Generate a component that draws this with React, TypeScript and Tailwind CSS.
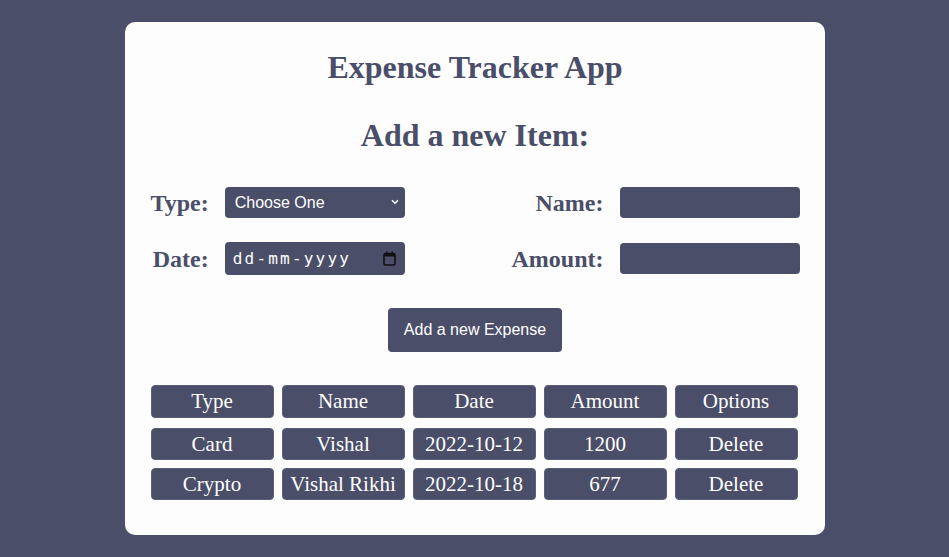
import { useState } from "react";

const serif = "font-['Liberation_Serif',serif]";
const sans = "font-['Liberation_Sans',Arial,sans-serif]";
const labelCls = `${serif} text-[24px] font-bold text-[#4a4e69] text-right leading-none`;
const fieldCls = `${sans} w-[180px] rounded-[4px] bg-[#4a4e69] text-white text-[16px] outline-none`;
const cellCls = `${serif} flex items-center justify-center rounded-[4px] border border-[#5c6075] bg-[#4a4e69] text-white text-[21px] leading-none`;

type Item = { type: string; name: string; date: string; amount: string };

const ITEMS: Item[] = [
  { type: "Card", name: "Vishal", date: "2022-10-12", amount: "1200" },
  { type: "Crypto", name: "Vishal Rikhi", date: "2022-10-18", amount: "677" },
];

function CalendarIcon() {
  return (
    <svg width="13" height="15" viewBox="0 0 13 15" fill="none" aria-hidden="true">
      <rect x="1" y="2.5" width="11" height="11.5" rx="1.5" stroke="#111" strokeWidth="1.6" />
      <rect x="1" y="2.5" width="11" height="3" fill="#111" />
      <rect x="3" y="0.5" width="1.6" height="3" fill="#111" />
      <rect x="8.4" y="0.5" width="1.6" height="3" fill="#111" />
    </svg>
  );
}

export default function App() {
  const [items] = useState(ITEMS);

  return (
    <div className="min-h-screen bg-[#4a4e69] pt-[22px] pb-[22px]">
      <div className="mx-auto w-[700px] rounded-[10px] bg-[#fdfdfd] pl-[26px] pr-[25px] pt-[27px] pb-[35px]">
        <h1 className={`${serif} text-center text-[32px] font-bold leading-[37px] text-[#4a4e69]`}>
          Expense Tracker App
        </h1>
        <h2 className={`${serif} mt-[31px] text-center text-[32px] font-bold leading-[37px] text-[#4a4e69]`}>
          Add a new Item:
        </h2>

        <div className="mt-[33px] grid grid-cols-[auto_180px_1fr_auto_180px] items-center gap-x-[16px] gap-y-[24px]">
          <label className={labelCls}>Type:</label>
          <div className="relative">
            <select className={`${fieldCls} h-[31px] appearance-none pl-[10px]`} defaultValue="">
              <option value="">Choose One</option>
              <option>Card</option>
              <option>Cash</option>
              <option>Crypto</option>
            </select>
            <svg
              className="pointer-events-none absolute right-[6px] top-[12px]"
              width="8"
              height="6"
              viewBox="0 0 8 6"
              fill="none"
              aria-hidden="true"
            >
              <path d="M1 1.2l3 3 3-3" stroke="#fff" strokeWidth="1.6" />
            </svg>
          </div>
          <div />
          <label className={labelCls}>Name:</label>
          <input className={`${fieldCls} h-[31px] px-[8px]`} type="text" />

          <label className={labelCls}>Date:</label>
          <div className={`${fieldCls} flex h-[33px] items-center justify-between pl-[8px] pr-[9px]`}>
            <span className="font-['DejaVu_Sans_Mono',monospace] text-[16px] tracking-[2.2px] text-white">
              dd-mm-yyyy
            </span>
            <CalendarIcon />
          </div>
          <div />
          <label className={labelCls}>Amount:</label>
          <input className={`${fieldCls} h-[31px] px-[8px]`} type="text" />
        </div>

        <button
          className={`${sans} mx-auto mt-[33px] block h-[44px] w-[174px] rounded-[4px] bg-[#4a4e69] text-[16px] text-white`}
        >
          Add a new Expense
        </button>

        <div className="mt-[33px] w-[647px]">
          <div className="grid h-[33px] grid-cols-5 gap-x-[8px]">
            {["Type", "Name", "Date", "Amount", "Options"].map((h) => (
              <div key={h} className={cellCls}>
                {h}
              </div>
            ))}
          </div>
          <div className="mt-[10px] flex flex-col gap-[8px]">
            {items.map((it) => (
              <div key={it.name} className="grid h-[32px] grid-cols-5 gap-x-[8px]">
                <div className={cellCls}>{it.type}</div>
                <div className={cellCls}>{it.name}</div>
                <div className={cellCls}>{it.date}</div>
                <div className={cellCls}>{it.amount}</div>
                <button className={cellCls}>Delete</button>
              </div>
            ))}
          </div>
        </div>
      </div>
    </div>
  );
}
